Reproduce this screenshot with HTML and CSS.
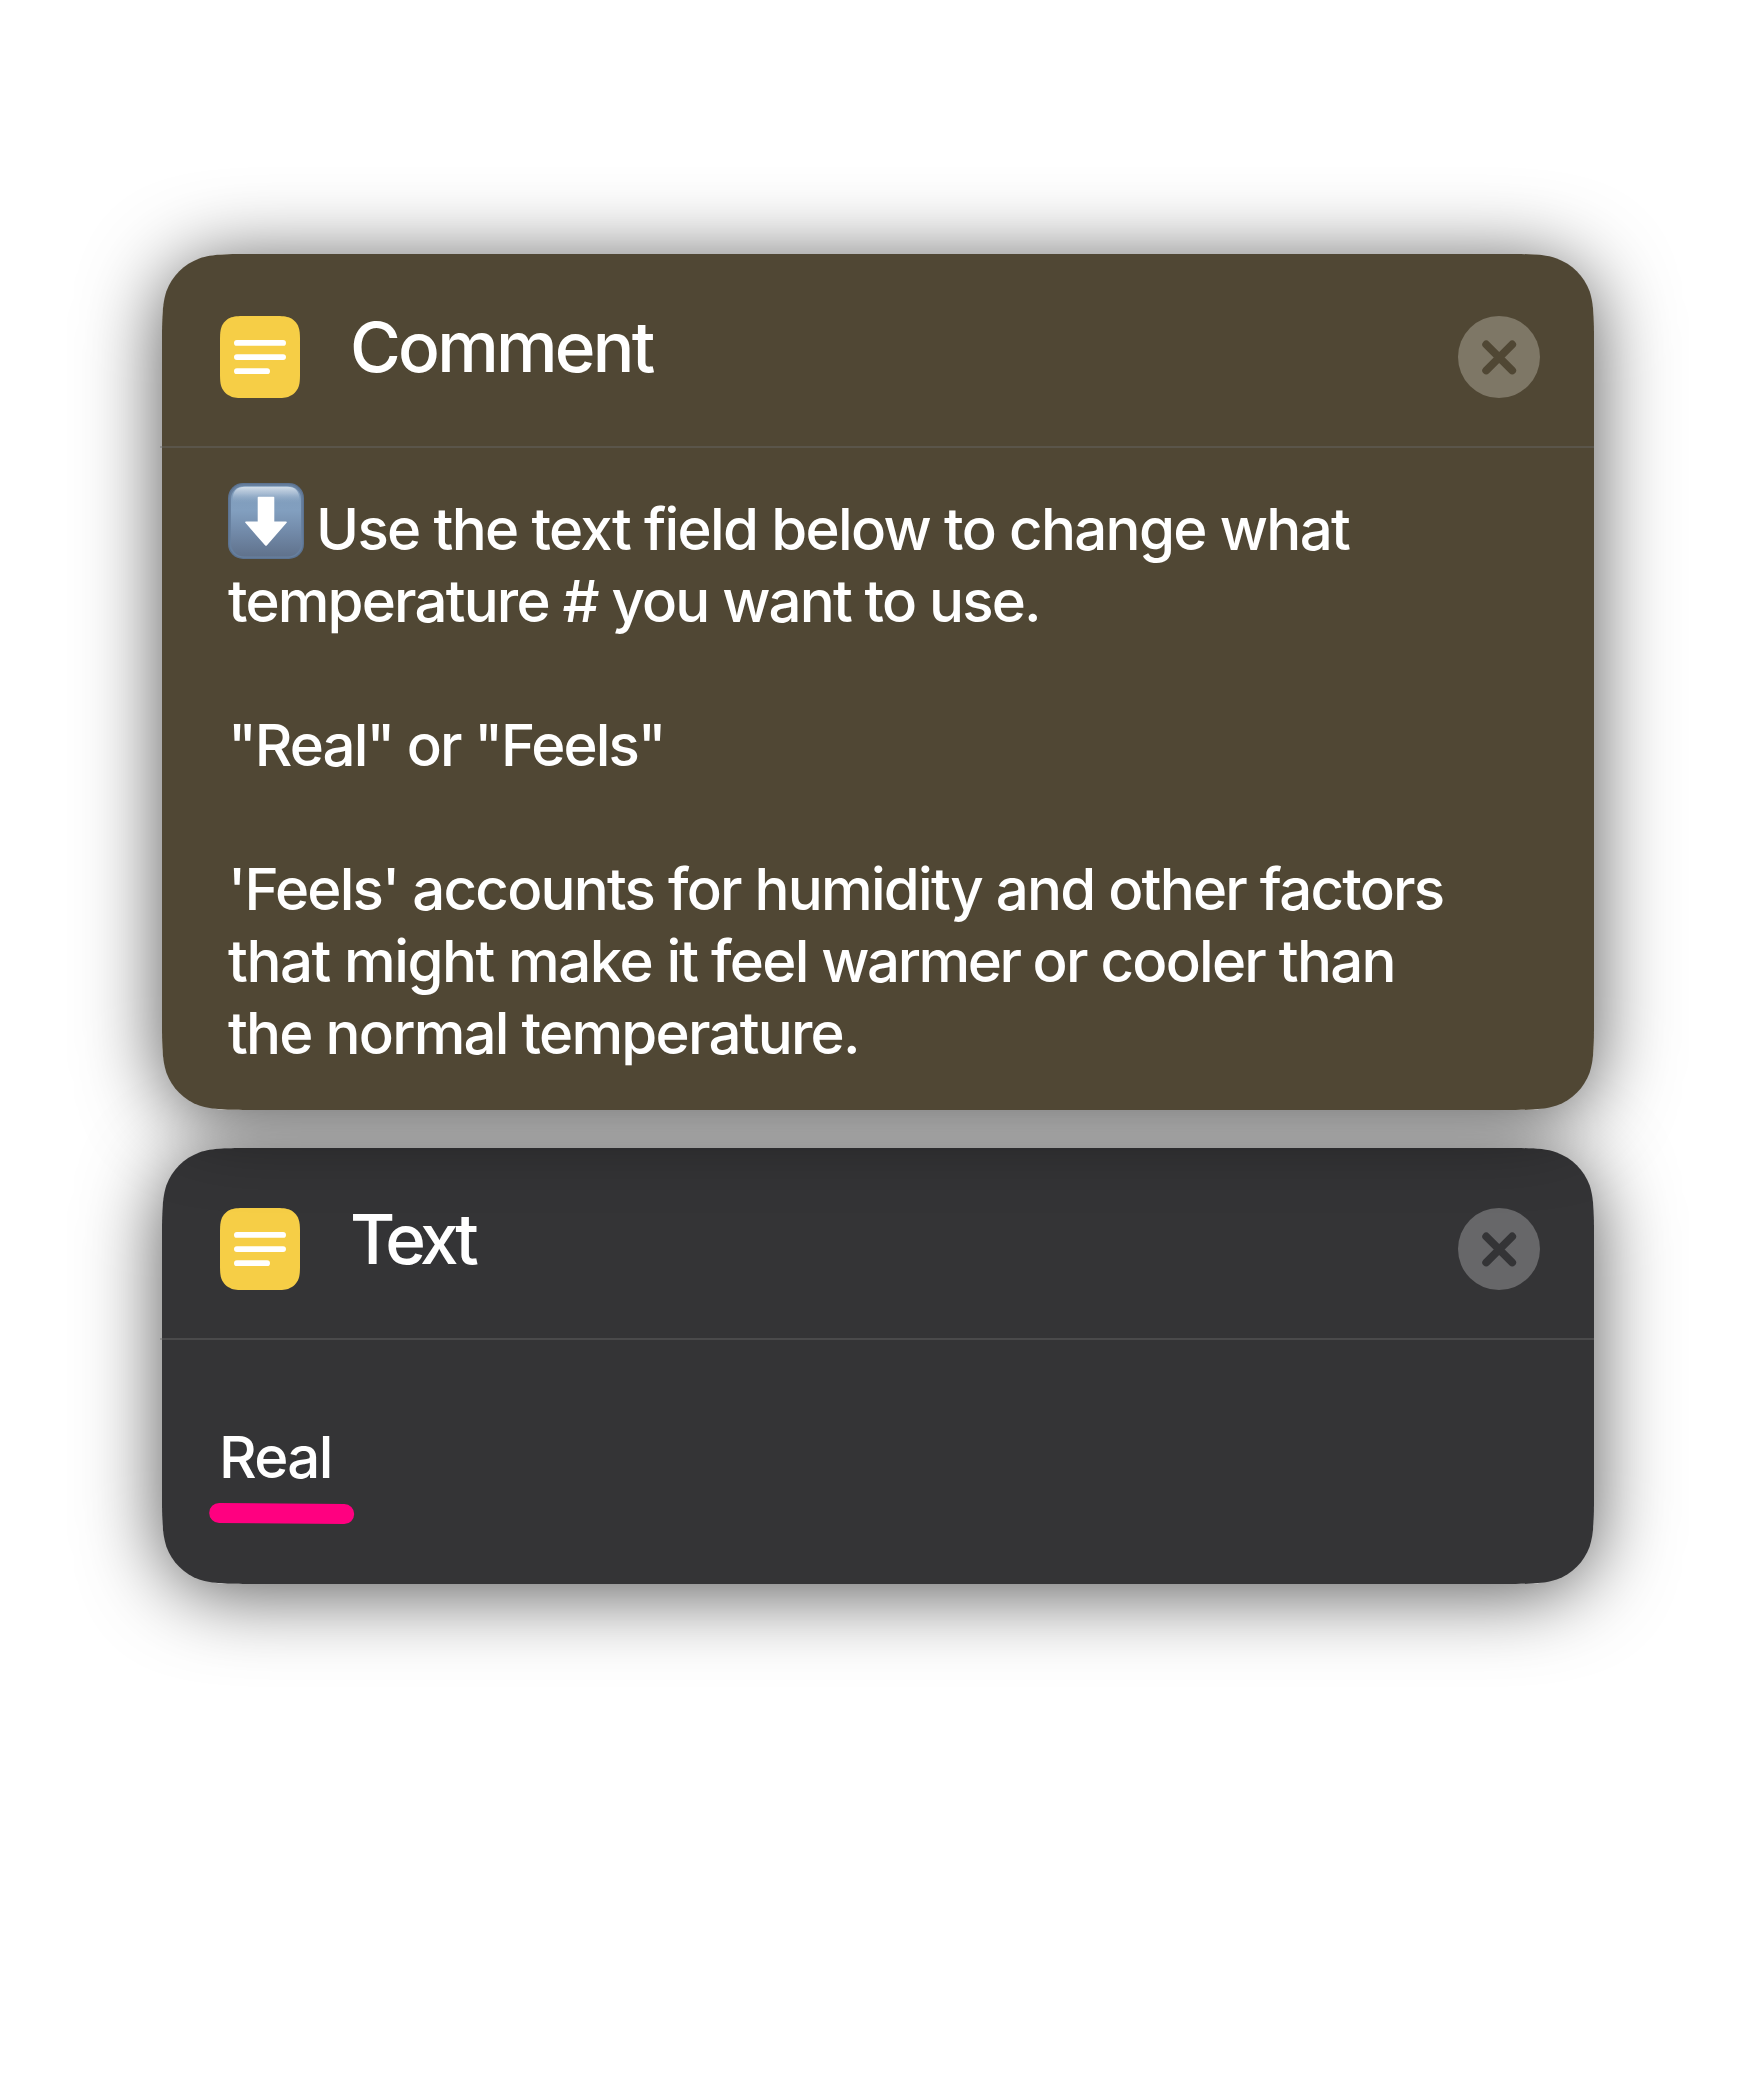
FILE: index.html
```
<!DOCTYPE html>
<html lang="en">
<head>
<meta charset="utf-8">
<title>Shortcut actions</title>
<link rel="stylesheet" href="styles.css">
</head>
<body>
<svg class="defs" aria-hidden="true">
  <symbol id="note" viewBox="0 0 80 82">
    <path fill="#f6ce46" d="M27.5 0H52.5C60.4 0 64.4 0 68.6 1.35C73.3 3.04 77 6.7 78.65 11.4C80 15.6 80 19.6 80 27.5V54.5C80 62.4 80 66.4 78.65 70.6C77 75.3 73.3 79 68.6 80.65C64.4 82 60.4 82 52.5 82H27.5C19.6 82 15.6 82 11.4 80.65C6.7 79 3 75.3 1.35 70.6C0 66.4 0 62.4 0 54.5V27.5C0 19.6 0 15.6 1.35 11.4C3 6.7 6.7 3.04 11.4 1.35C15.6 0 19.6 0 27.5 0Z"/>
    <path stroke="#fff" stroke-width="5.8" stroke-linecap="round" d="M16.9 26.9H63.1M16.9 41.1H63.1M16.9 55.2H47.1"/>
  </symbol>
  <symbol id="close" viewBox="0 0 82 82">
    <circle class="close-disc" cx="41" cy="41" r="41"/>
    <path class="close-cross" d="M28.2 28.4L54.2 54.4M54.2 28.4L28.2 54.4"/>
  </symbol>
</svg>
<main class="actions">
  <section class="card card-comment">
    <header class="card-header">
      <svg class="icon"><use href="#note"/></svg>
      <h2 class="title title-comment">Comment</h2>
      <svg class="close"><use href="#close"/></svg>
    </header>
    <div class="divider"></div>
    <div class="body body-comment">
      <p class="line line-first">
        <svg class="arrow" viewBox="0 0 76 76">
          <defs>
            <linearGradient id="face" x1="0" y1="0" x2="0" y2="1">
              <stop offset="0" stop-color="#7f9cbb"/>
              <stop offset=".35" stop-color="#829fbf"/>
              <stop offset=".65" stop-color="#728aa9"/>
              <stop offset="1" stop-color="#60728c"/>
            </linearGradient>
            <linearGradient id="shine" x1="0" y1="0" x2="0" y2="1">
              <stop offset="0" stop-color="#d4dfea"/>
              <stop offset=".4" stop-color="#b4c6da" stop-opacity=".75"/>
              <stop offset="1" stop-color="#829fbf" stop-opacity="0"/>
            </linearGradient>
          </defs>
          <rect width="76" height="76" rx="15" fill="#5c7391"/>
          <rect x="1.3" y="1.3" width="73.4" height="73.4" rx="14" fill="#67809f"/>
          <rect x="3" y="3" width="70" height="70.5" rx="13" fill="url(#face)"/>
          <path fill="url(#shine)" d="M4.5 21V17Q4.5 3.7 17 3.7H59Q71.5 3.7 71.5 17V21Z"/>
          <path fill="#fff" d="M30.5 13.7H45.5Q46.3 13.7 46.3 14.5V38.5H58Q59.6 38.5 58.6 39.8L39 62.2Q38 63.2 37 62.2L17.4 39.8Q16.4 38.5 18 38.5H29.7V14.5Q29.7 13.7 30.5 13.7Z"/>
        </svg>
        <span class="track-a">Use the text field below to change what</span>
      </p>
      <p class="line track-c">temperature # you want to use.</p>
      <p class="line line-gap track-d">"Real" or "Feels"</p>
      <p class="line line-gap track-b">'Feels' accounts for humidity and other factors</p>
      <p class="line track-b"><span class="track-wide">that might make </span>it feel <span class="track-tight">warmer </span>or cooler than</p>
      <p class="line track-b">the normal temperature.</p>
    </div>
  </section>
  <section class="card card-text">
    <header class="card-header">
      <svg class="icon"><use href="#note"/></svg>
      <h2 class="title title-text">Text</h2>
      <svg class="close"><use href="#close"/></svg>
    </header>
    <div class="divider"></div>
    <div class="body body-text">
      <p class="line track-a">Real</p>
      <svg class="marker" viewBox="0 0 148 23"><path d="M11.2 11L136.2 12"/></svg>
    </div>
  </section>
</main>
</body>
</html>
```
FILE: styles.css
```
* { box-sizing: border-box; }

body {
  margin: 0;
  min-height: 2096px;
  background: #fff;
  color: #fff;
  font-family: Inter, "Liberation Sans", sans-serif;
  font-weight: 500;
}

.defs { display: none; }

.actions {
  display: flex;
  flex-direction: column;
  gap: 38px;
  width: 1432px;
  margin-left: 162px;
  padding-top: 254px;
}

.card {
  position: relative;
  border-radius: 66px;
  box-shadow: 0 8px 80px rgba(0, 0, 0, .67);
}

/* Card surface with continuous-curvature corners */
.card::before {
  content: "";
  position: absolute;
  inset: 0;
  z-index: -1;
  background: var(--surface);
  clip-path: var(--outline);
}

.card-comment {
  --surface: #504734;
  --disc: #7e7766;
  --outline: path("M90.2 0H1341.8C1367.8 0 1380.8 0 1394.7 4.4C1410 10 1422 22 1427.6 37.3C1432 51.2 1432 64.2 1432 90.2V765.8C1432 791.8 1432 804.8 1427.6 818.7C1422 834 1410 846 1394.7 851.6C1380.8 856 1367.8 856 1341.8 856H90.2C64.2 856 51.2 856 37.3 851.6C22 846 10 834 4.4 818.7C0 804.8 0 791.8 0 765.8V90.2C0 64.2 0 51.2 4.4 37.3C10 22 22 10 37.3 4.4C51.2 0 64.2 0 90.2 0Z");
  z-index: 2;
  height: 856px;
  padding-top: 62px;
}

.card-text {
  --surface: #343436;
  --disc: #676769;
  --outline: path("M90.2 0H1341.8C1367.8 0 1380.8 0 1394.7 4.4C1410 10 1422 22 1427.6 37.3C1432 51.2 1432 64.2 1432 90.2V345.8C1432 371.8 1432 384.8 1427.6 398.7C1422 414 1410 426 1394.7 431.6C1380.8 436 1367.8 436 1341.8 436H90.2C64.2 436 51.2 436 37.3 431.6C22 426 10 414 4.4 398.7C0 384.8 0 371.8 0 345.8V90.2C0 64.2 0 51.2 4.4 37.3C10 22 22 10 37.3 4.4C51.2 0 64.2 0 90.2 0Z");
  z-index: 1;
  height: 436px;
  padding-top: 60px;
}

.card-header {
  display: flex;
  align-items: flex-start;
  height: 130px;
  padding: 0 54px 0 58px;
}

.icon { width: 80px; height: 82px; }

.title {
  flex: 1;
  margin: -11px 0 0 50px;
  font-size: 69.3px;
  font-weight: 500;
  line-height: 84px;
}

.title-comment { letter-spacing: -2.75px; }
.title-text { letter-spacing: -4.5px; }

.close { width: 82px; height: 82px; }
.close-disc { fill: var(--disc); }
.close-cross {
  stroke: var(--surface);
  stroke-width: 7.8;
  stroke-linecap: round;
}

.card-comment .card-header { height: 130px; }

.divider {
  height: 2px;
  margin-left: -2px;
  background: rgba(104, 104, 106, .42);
}

.body-comment { padding: 45px 0 0 66px; }
.body-text { padding: 81px 0 0 57px; }

.line {
  margin: 0;
  font-size: 58.2px;
  line-height: 72px;
  white-space: nowrap;
}

.line-first {
  display: flex;
  align-items: flex-start;
  height: 72px;
}
.line-gap { margin-top: 72px; }

.track-a { letter-spacing: -1.66px; }
.track-b { letter-spacing: -1.76px; }
.track-c { letter-spacing: -1.83px; }
.track-d { letter-spacing: -1.94px; }
.track-wide { letter-spacing: -1.45px; }
.track-tight { letter-spacing: -2.45px; }

.arrow {
  flex: none;
  width: 76px;
  height: 76px;
  margin: -10px 12px 0 0;
}

.marker {
  display: block;
  width: 148px;
  height: 23px;
  margin: 9px 0 0 -11px;
}
.marker path {
  stroke: #ff0080;
  stroke-width: 20;
  stroke-linecap: round;
}
```
